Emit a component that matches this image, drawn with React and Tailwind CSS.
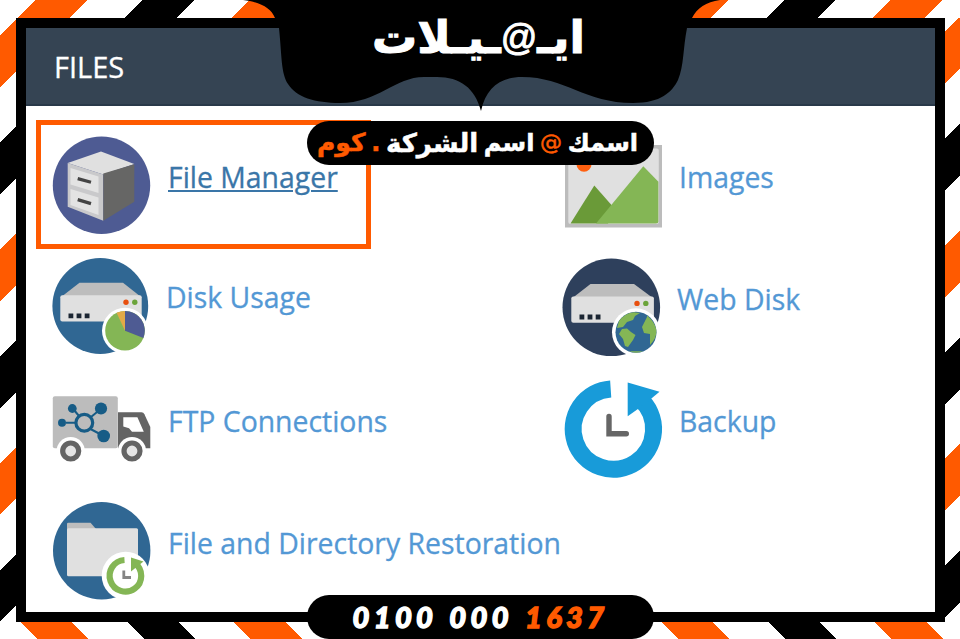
import clsx from "clsx";

const FileManagerIcon = () => (
  <svg viewBox="0 0 100 100" className="size-25 shrink-0">
    <circle cx="49.5" cy="50.3" r="48.7" fill="#4e5b93" />
    <path d="M49 16.5 82.3 29 51.3 39.5 15.7 28Z" fill="#e0e0e0" />
    <path d="M15.7 28 51.3 39.5V85.7L15.7 71.7Z" fill="#c9c9cb" />
    <path d="M82.3 29.3V66.7L51.3 85.7V38.5Z" fill="#666665" />
    <path d="M18.5 33 46.5 41.5V58L18.5 49.5ZM18.5 54 46.5 62.5V80L18.5 70Z" fill="#e3e3e3" />
    <path d="M25.7 43.6 39 47.2M25.7 64.6 39 68.6" stroke="#444" strokeWidth="3.2" />
  </svg>
);

const Server = ({ dy = 0, wide = 0 }) => (
  <g transform={`translate(0 ${dy})`}>
    <path d={`M27.5 25.7H71L${89.7 + wide} 40.5H8.5Z`} fill="#bdbdbd" />
    <rect x="8.3" y="38.2" width={81.4 + wide} height="26.3" rx="2" fill="#e0e0e0" />
    <circle cx="74" cy="45.2" r="2.7" fill="#e8500f" />
    <circle cx="82.8" cy="45.2" r="2.7" fill="#6ba43a" />
    <path d="M16.5 56.4h4.8v4.8h-4.8zM24.6 56.4h4.8v4.8h-4.8zM32.7 56.4h4.8v4.8h-4.8z" fill="#1c2633" />
  </g>
);

const DiskUsageIcon = () => (
  <svg viewBox="0 0 100 100" className="size-25 shrink-0">
    <circle cx="48.3" cy="49" r="47.9" fill="#306793" />
    <Server />
    <circle cx="73" cy="73.7" r="23" fill="#fff" />
    <circle cx="73" cy="73.7" r="19.8" fill="#84b655" />
    <path d="M73 73.7V53.9A19.8 19.8 0 0 1 91.4 81Z" fill="#4e5b93" />
    <path d="M73 73.7 64.6 55.8A19.8 19.8 0 0 1 73 53.9Z" fill="#e3aa48" />
  </svg>
);

const FtpIcon = () => (
  <svg viewBox="0 0 100 100" className="size-25 shrink-0">
    <rect x="0.8" y="17.3" width="65" height="52" rx="2" fill="#bcbcbc" />
    <path d="M66 33.3H89.5Q91.5 33.3 92.4 35.2L98.3 48V69.3H66Z" fill="#646464" />
    <path d="M71.3 38.3H85.4L91.8 52.7H80L77 49.2 71.3 47.5Z" fill="#fff" />
    <g stroke="#175c86" strokeWidth="2">
      <path d="M14 43.7H24M22 31 27 37M39 38 49 29.7M38.5 50 51.7 57" />
      <circle cx="32.3" cy="43.7" r="8.4" fill="none" strokeWidth="3.2" />
    </g>
    <g fill="#175c86">
      <circle cx="20.3" cy="29.5" r="4.4" />
      <circle cx="49" cy="29.5" r="6.1" />
      <circle cx="51.7" cy="57" r="6.3" />
      <circle cx="10" cy="43.7" r="4" />
    </g>
    <g fill="#e5e5e5" stroke="#646464" strokeWidth="5.2">
      <circle cx="18.7" cy="72" r="14" fill="#fff" stroke="none" />
      <circle cx="80" cy="72" r="14" fill="#fff" stroke="none" />
      <circle cx="18.7" cy="72" r="8" />
      <circle cx="80" cy="72" r="8" />
    </g>
  </svg>
);

const RestoreIcon = () => (
  <svg viewBox="0 0 100 100" className="size-25 shrink-0">
    <circle cx="49.7" cy="49.7" r="48.7" fill="#306793" />
    <path d="M15 30V23Q15 21.7 16.3 21.7H38.5L44 28V33H15Z" fill="#bdbdbd" />
    <rect x="15" y="27.3" width="71" height="48" rx="1.5" fill="#e0e0e0" />
    <circle cx="73.7" cy="74.7" r="24" fill="#fff" />
    <path d="M72.5 59A15.8 15.8 0 1 0 83 62.2" fill="none" stroke="#84b655" strokeWidth="6.2" />
    <path d="M79 56.5 91.5 60.5 79 70.5Z" fill="#84b655" />
    <path d="M71.8 69.5V76.5H79" fill="none" stroke="#858585" strokeWidth="2.8" />
  </svg>
);

const ImagesIcon = () => (
  <svg viewBox="0 0 100 100" className="size-25 shrink-0">
    <rect x="2" y="10" width="97" height="82.5" fill="#bcbcbc" />
    <rect x="5.3" y="13.5" width="90.5" height="75.5" rx="2" fill="#e0e0e0" />
    <circle cx="21" cy="29.3" r="7.5" fill="#ff6010" />
    <path d="M7.5 88.6 31.3 50.5 52 74 45 88.6Z" fill="#6a9a38" />
    <path d="M33 88.6 80.3 31.2 95.4 46.7V86.5Q95.4 88.6 93 88.6Z" fill="#84b655" />
  </svg>
);

const WebDiskIcon = () => (
  <svg viewBox="0 0 100 100" className="size-25 shrink-0 overflow-visible">
    <circle cx="48.3" cy="50.3" r="48.8" fill="#2e405c" />
    <Server dy={1.2} wide={1.2} />
    <circle cx="73" cy="75.3" r="24" fill="#fff" />
    <circle cx="73" cy="75.3" r="20.5" fill="#306793" />
    <g fill="#84b655">
      <path d="M56 64Q62 56 71 55.2L77 56 72 59 70 63 64 65 60 70 54 71Z" />
      <path d="M59 72 64 71.5 68 75 72.5 78 70 83 65 90 62 89 60 82 56 77Z" />
      <path d="M84 60 81 66 79 70 81 76 87 77 87 88Q94 81 93.4 73 92 65 84 58.5Z" />
      <path d="M66 94.3 80 94.3Q73 97 66 94.3Z" />
    </g>
  </svg>
);

const BackupIcon = () => (
  <svg viewBox="0 0 100 100" className="size-25 shrink-0">
    <path d="M47.7 9.9A40.2 40.2 0 1 0 77 19.9" fill="none" stroke="#189bd9" strokeWidth="17" />
    <path d="M64.7 3.5 96.5 12.8 88.7 19.3 75.3 29.8 64.7 37.2Z" fill="#189bd9" />
    <path d="M46 37.5V54.8H63.3" fill="none" stroke="#666" strokeWidth="5.4" strokeLinecap="round" />
  </svg>
);

const items = [
  { label: "File Manager", Icon: FileManagerIcon, active: true, text: "ml-4 pb-4" },
  { label: "Images", Icon: ImagesIcon, text: "ml-4 pb-4" },
  { label: "Disk Usage", Icon: DiskUsageIcon, text: "ml-3.5 pb-5" },
  { label: "Web Disk", Icon: WebDiskIcon, text: "ml-3.5 pb-4" },
  { label: "FTP Connections", Icon: FtpIcon, text: "ml-4 pb-4" },
  { label: "Backup", Icon: BackupIcon, text: "ml-4 pb-4" },
  { label: "File and Directory Restoration", Icon: RestoreIcon, text: "ml-4 pb-4" },
];

const FilesPanel = () => (
  <section className="flex-1 border-10 border-black bg-white font-['Open_Sans',sans-serif] text-[28.4px] [-webkit-text-stroke:0.3px]">
    <h2 className="flex h-[78px] items-center border-b-2 border-[#293949] bg-[#354453] pt-0.5 pl-7 text-[29px] text-white">
      FILES
    </h2>
    <div className="grid grid-cols-[511px_1fr] pt-[18px]">
      {items.map(({ label, Icon, active, text }) => (
        <div key={label} className="relative flex h-[122px] items-center pl-[26px] whitespace-nowrap">
          <Icon />
          <a
            className={clsx(
              text,
              active
                ? "text-[#3a76a8] underline decoration-2 underline-offset-2"
                : "text-[#5398d5]"
            )}
          >
            {label}
          </a>
          {active && (
            <div className="absolute -top-1 left-2.5 h-[129px] w-[335px] border-5 border-[#ff5a00]" />
          )}
        </div>
      ))}
    </div>
  </section>
);

const Banner = () => (
  <div className="absolute inset-x-0 top-0 h-28">
    <svg viewBox="0 0 960 112" className="h-28 w-full">
      <path d="M243 0C260 2 271 8 275 18L279 28C282 58 281 73 288 84 296 97 315 103 340 103 378 103 395 77 424 77H437C460 77 475 88 481 111 486 88 500 77 522 77 565 77 585 103 633 103 661 103 672 92 678 80 684 66 683 48 687 28L692 18C697 8 706 2 720 0Z" />
    </svg>
    <div
      dir="rtl"
      className="absolute top-2 left-[373px] flex w-[211px] justify-center font-['DejaVu_Sans',sans-serif] text-[45px] leading-[60px] font-bold text-white [-webkit-text-stroke:1px_#fff]"
    >
      <span>ايـ</span>
      <span className="font-['Liberation_Sans',sans-serif] text-[36px] font-normal">@</span>
      <span>ـيـلات</span>
    </div>
  </div>
);

const EmailPill = () => (
  <div
    dir="rtl"
    className="absolute top-[121px] left-[307px] flex h-11 w-[347px] items-center justify-between rounded-full bg-black pr-4 pl-2.5 font-['DejaVu_Sans',sans-serif] text-2xl font-bold text-white [-webkit-text-stroke:0.5px]"
  >
    <span>اسمك</span>
    <span className="text-[22px] font-normal text-[#ff5a00]">@</span>
    <span>اسم</span>
    <span className="text-[26px]">الشركة</span>
    <span className="text-[#ff5a00]">.</span>
    <span className="text-[25px] text-[#ff5a00]">كوم</span>
  </div>
);

const PhonePill = () => (
  <div className="absolute bottom-0 left-[307px] flex h-11 w-[347px] items-center justify-center gap-3 rounded-full bg-black font-['Lato',sans-serif] text-[29px] font-black tracking-[4.4px] text-white italic [-webkit-text-stroke:1.4px]">
    <span>0100</span>
    <span>000</span>
    <span className="text-[#ff5a00]">1637</span>
  </div>
);

export default function App() {
  return (
    <div className="relative flex h-[639px] w-[960px] flex-col overflow-hidden bg-[repeating-linear-gradient(135deg,#fff_0px,#fff_25.1px,#ff5a00_25.1px,#ff5a00_61.7px,#fff_61.7px,#fff_100.8px,#000_100.8px,#000_137.3px,#fff_137.3px,#fff_151.2px)]">
      <div className="mt-[18px] flex h-[604px] pl-4">
        <FilesPanel />
        <div className="w-[15px] bg-[repeating-linear-gradient(135deg,#fff_0px,#fff_9.8px,#ff5a00_9.8px,#ff5a00_46.3px,#fff_46.3px,#fff_85.4px,#000_85.4px,#000_122px,#fff_122px,#fff_151px)]" />
      </div>
      <div className="h-[17px] bg-[repeating-linear-gradient(45deg,#fff_0px,#fff_26.2px,#ff5a00_26.2px,#ff5a00_62.7px,#fff_62.7px,#fff_102px,#000_102px,#000_138.4px,#fff_138.4px,#fff_151.1px)]" />
      <Banner />
      <EmailPill />
      <PhonePill />
    </div>
  );
}
